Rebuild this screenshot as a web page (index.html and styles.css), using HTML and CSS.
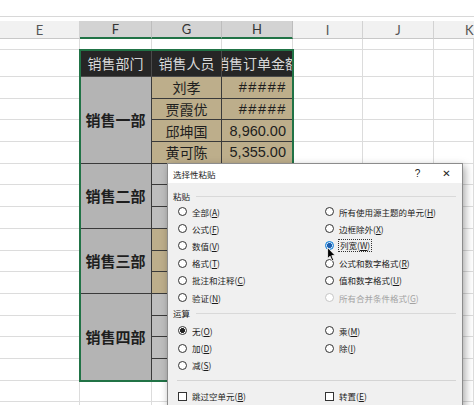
FILE: index.html
```html
<!DOCTYPE html>
<html lang="zh-CN">
<head>
<meta charset="utf-8">
<title>选择性粘贴</title>
<link rel="stylesheet" href="styles.css">
</head>
<body>
<div class="top"></div>
<div class="colhead">
  <div>E</div><div class="sel">F</div><div class="sel">G</div><div class="sel">H</div><div>I</div><div>J</div><div class="k">K</div>
</div>
<div class="sheet">
  <div class="tbl">
    <div class="t th">销售部门</div><div class="t th">销售人员</div><div class="t th">销售订单金额</div>
    <div class="t dept d1">销售一部</div>
    <div class="t tan name">刘孝</div><div class="t tan num hash">#####</div>
    <div class="t tan name">贾霞优</div><div class="t tan num hash">#####</div>
    <div class="t tan name">邱坤国</div><div class="t tan num">8,960.00</div>
    <div class="t tan name">黄可陈</div><div class="t tan num">5,355.00</div>
    <div class="t dept d2">销售二部</div>
    <div class="t gray name">王子</div><div class="t gray num">3,250.00</div>
    <div class="t gray name">赵安</div><div class="t gray num">4,120.00</div>
    <div class="t gray name">孙明</div><div class="t gray num">2,870.00</div>
    <div class="t dept d3">销售三部</div>
    <div class="t tan name">周林</div><div class="t tan num">6,300.00</div>
    <div class="t tan name">吴迪</div><div class="t tan num">1,980.00</div>
    <div class="t tan name">郑浩</div><div class="t tan num">7,450.00</div>
    <div class="t dept d4">销售四部</div>
    <div class="t gray name">冯雪</div><div class="t gray num">2,640.00</div>
    <div class="t gray name">陈亮</div><div class="t gray num">5,010.00</div>
    <div class="t gray name">褚红</div><div class="t gray num">3,780.00</div>
    <div class="t gray name">卫东</div><div class="t gray num">4,560.00</div>
  </div>
  <div class="c"></div><div class="c"></div><div class="c"></div><div class="c"></div><div class="c"></div><div class="c"></div><div class="c"></div>
  <div class="c"></div><div class="c"></div><div class="c"></div><div class="c"></div>
  <div class="c"></div><div class="c"></div><div class="c"></div><div class="c"></div>
  <div class="c"></div><div class="c"></div><div class="c"></div><div class="c"></div>
  <div class="c"></div><div class="c"></div><div class="c"></div><div class="c"></div>
  <div class="c"></div><div class="c"></div><div class="c"></div><div class="c"></div>
  <div class="c"></div><div class="c"></div><div class="c"></div><div class="c"></div>
  <div class="c"></div><div class="c"></div><div class="c"></div><div class="c"></div>
  <div class="c"></div><div class="c"></div><div class="c"></div><div class="c"></div>
  <div class="c"></div><div class="c"></div><div class="c"></div><div class="c"></div>
  <div class="c"></div><div class="c"></div><div class="c"></div><div class="c"></div>
  <div class="c"></div><div class="c"></div><div class="c"></div><div class="c"></div>
  <div class="c"></div><div class="c"></div><div class="c"></div><div class="c"></div>
  <div class="c"></div><div class="c"></div><div class="c"></div><div class="c"></div>
  <div class="c"></div><div class="c"></div><div class="c"></div><div class="c"></div>
  <div class="c"></div><div class="c"></div><div class="c"></div><div class="c"></div>
  <div class="c"></div><div class="c"></div><div class="c"></div><div class="c"></div><div class="c"></div><div class="c"></div><div class="c"></div>
  <div class="c"></div><div class="c"></div><div class="c"></div><div class="c"></div><div class="c"></div><div class="c"></div><div class="c"></div>
</div>

<div class="dlg">
  <div class="title">
    <span class="ttl">选择性粘贴</span>
    <span class="tbtn q">?</span>
    <span class="tbtn x">✕</span>
  </div>
  <div class="body">
    <div class="sec">粘贴</div>
    <div class="opts">
      <div class="opt"><i class="rb"></i><span>全部(<u>A</u>)</span></div>
      <div class="opt"><i class="rb"></i><span>所有使用源主题的单元(<u>H</u>)</span></div>
      <div class="opt"><i class="rb"></i><span>公式(<u>F</u>)</span></div>
      <div class="opt"><i class="rb"></i><span>边框除外(<u>X</u>)</span></div>
      <div class="opt"><i class="rb"></i><span>数值(<u>V</u>)</span></div>
      <div class="opt"><i class="rb on"></i><span class="focus">列宽(<u>W</u>)</span></div>
      <div class="opt"><i class="rb"></i><span>格式(<u>T</u>)</span></div>
      <div class="opt"><i class="rb"></i><span>公式和数字格式(<u>R</u>)</span></div>
      <div class="opt"><i class="rb"></i><span>批注和注释(<u>C</u>)</span></div>
      <div class="opt"><i class="rb"></i><span>值和数字格式(<u>U</u>)</span></div>
      <div class="opt"><i class="rb"></i><span>验证(<u>N</u>)</span></div>
      <div class="opt dis"><i class="rb"></i><span>所有合并条件格式(<u>G</u>)</span></div>
    </div>
    <div class="sec sec2">运算</div>
    <div class="opts ops">
      <div class="opt"><i class="rb chk"></i><span>无(<u>O</u>)</span></div>
      <div class="opt"><i class="rb"></i><span>乘(<u>M</u>)</span></div>
      <div class="opt"><i class="rb"></i><span>加(<u>D</u>)</span></div>
      <div class="opt"><i class="rb"></i><span>除(<u>I</u>)</span></div>
      <div class="opt"><i class="rb"></i><span>减(<u>S</u>)</span></div>
      <div class="opt"></div>
    </div>
    <div class="sep"></div>
    <div class="opts boxes">
      <div class="opt"><i class="cb"></i><span>跳过空单元(<u>B</u>)</span></div>
      <div class="opt"><i class="cb"></i><span>转置(<u>E</u>)</span></div>
    </div>
  </div>
</div>

<svg class="cursor" width="9" height="15" viewBox="0 0 9 15"><path d="M0.6 0.6 V11.6 L3.1 9.2 L5 13.8 L6.7 13.1 L4.8 8.6 H8.2 Z" fill="#000" stroke="#fff" stroke-width="0.8"/></svg>
</body>
</html>
```

FILE: styles.css
```css
* { box-sizing: border-box; }
body {
  margin: 0;
  width: 474px;
  height: 405px;
  overflow: hidden;
  background: #fff;
  font-family: "Noto Sans CJK SC", "Noto Sans", sans-serif;
  position: relative;
}
.top {
  height: 17px;
  border-bottom: 1px solid #d8d8d8;
  margin-bottom: 4px;
}
.colhead {
  display: grid;
  grid-template-columns: 80px 72px 70px 71px 70px 71px 1fr;
  height: 18px;
}
.colhead div {
  background: #f1f1f1;
  border-right: 1px solid #d2d2d2;
  border-bottom: 1px solid #c8c8c8;
  display: flex;
  align-items: center;
  justify-content: center;
  font-family: Lato, "Liberation Sans", sans-serif;
  font-size: 13px;
  color: #555;
}
.colhead .k {
  justify-content: flex-start;
  padding-left: 31px;
  border-right: 0;
}
.colhead .sel {
  background: #d3d3d3;
  border-bottom: 2px solid #217346;
  border-right-color: #bdbdbd;
  color: #333;
}
.sheet {
  display: grid;
  grid-template-columns: 80px 72px 70px 71px 70px 71px 1fr;
  grid-template-rows: 11px 27px repeat(16, 21.7px);
}
.c {
  border-right: 1px solid #dcdcdc;
  border-bottom: 1px solid #dcdcdc;
}
.tbl {
  grid-column: 2 / 5;
  grid-row: 2 / 17;
  display: grid;
  grid-template-columns: 72px 70px 71px;
  grid-template-rows: 27px repeat(14, 1fr);
  outline: 2px solid #217346;
  outline-offset: -1px;
  position: relative;
  z-index: 1;
}
.t {
  border-right: 1px solid #3a3a3a;
  border-bottom: 1px solid #3a3a3a;
  display: flex;
  align-items: center;
  justify-content: center;
  overflow: hidden;
  white-space: nowrap;
  color: #1e1e1e;
}
.th {
  background: #262626;
  color: #d8d8d8;
  font-size: 14px;
  border-color: #4a4a4a;
}
.dept {
  background: #b4b4b4;
  font-size: 15px;
  font-weight: 700;
  grid-column: 1;
}
.d1 { grid-row: 2 / 6; }
.d2 { grid-row: 6 / 9; }
.d3 { grid-row: 9 / 12; }
.d4 { grid-row: 12 / 16; }
.tan { background: #bdae8b; }
.gray { background: #bebebe; }
.name { font-size: 14px; }
.num {
  justify-content: flex-end;
  padding-right: 6px;
  font-family: "Liberation Sans", Arial, sans-serif;
  font-size: 14.5px;
}
.hash { letter-spacing: 1.6px; padding-right: 5px; }

.dlg {
  position: absolute;
  left: 167px;
  top: 163px;
  width: 296px;
  height: 262px;
  background: #f0f0f0;
  border: 1px solid #8c8c8c;
  box-shadow: 2px 3px 8px rgba(0, 0, 0, 0.35);
  font-size: 8.5px;
  color: #1b1b1b;
  z-index: 5;
}
.title {
  height: 19px;
  background: #fff;
  display: flex;
  align-items: center;
  padding-left: 5px;
  padding-right: 1px;
}
.ttl { flex: 1; }
.tbtn {
  width: 29px;
  text-align: center;
  font-family: "Liberation Sans", sans-serif;
  color: #222;
}
.q { font-size: 10px; }
.x { font-size: 10px; font-family: "DejaVu Sans", sans-serif; }
.body { padding-left: 5px; }
.sec {
  height: 14px;
  margin-top: 6px;
  display: flex;
  align-items: center;
  gap: 6px;
}
.sec::after {
  content: "";
  flex: 1;
  height: 1px;
  background: #d9d9d9;
  margin-right: 6px;
}
.sec2 { margin-top: 0; }
.opts {
  display: grid;
  grid-template-columns: 147px 1fr;
  grid-auto-rows: 17.2px;
  padding-left: 5px;
}
.ops { margin-top: 2.2px; }
.opt {
  display: flex;
  align-items: center;
  gap: 5px;
  white-space: nowrap;
}
.rb {
  width: 9px;
  height: 9px;
  border: 1px solid #333;
  border-radius: 50%;
  background: #fff;
  flex: none;
}
.rb.on {
  border-color: #0078d7;
  background: radial-gradient(circle, #1b5fb0 0 2.2px, #cfe3f7 2.8px);
}
.rb.chk {
  background: radial-gradient(circle, #222 0 2.2px, #fff 2.8px);
}
.dis { color: #a3a3a3; }
.dis .rb { border-color: #c6c6c6; }
.focus {
  outline: 1px dotted #333;
  padding: 0 1px;
  line-height: 11px;
}
.sep {
  height: 1px;
  background: #d4d4d4;
  margin: 6px 6px 0 4px;
}
.boxes { margin-top: 7px; }
.cb {
  width: 9px;
  height: 9px;
  border: 1px solid #333;
  background: #fff;
  flex: none;
}
.cursor {
  position: absolute;
  left: 327px;
  top: 247px;
  z-index: 10;
}
```
